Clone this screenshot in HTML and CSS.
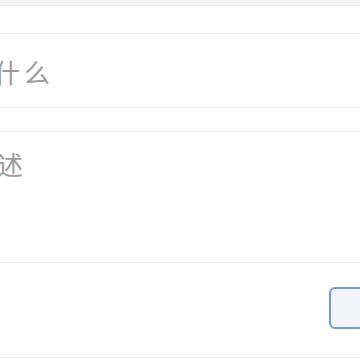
FILE: index.html
```html
<!DOCTYPE html>
<html lang="zh">
<head>
<meta charset="utf-8">
<link rel="stylesheet" href="styles.css">
</head>
<body>
<div class="page">
  <div class="band"></div>
  <div class="row row-short"></div>
  <div class="row row-input"><span class="placeholder shift">什么</span></div>
  <div class="gap"></div>
  <div class="row row-area"><span class="placeholder shift2">述</span></div>
  <div class="row row-actions"><button class="btn" type="button"></button></div>
</div>
</body>
</html>
```
FILE: styles.css
```css
html, body {
  margin: 0;
  padding: 0;
  background: #ffffff;
}
body {
  width: 360px;
  height: 360px;
  overflow: hidden;
  font-family: "Noto Sans CJK SC", "Noto Sans", sans-serif;
}
.page {
  display: flex;
  flex-direction: column;
}
.band {
  height: 5px;
  background: #f4f4f4;
  border-bottom: 1px solid #ebebeb;
}
.row {
  background: #ffffff;
  border-bottom: 1px solid #ebebeb;
}
.row-short {
  height: 27px;
}
.row-input {
  height: 73px;
  display: flex;
  align-items: center;
}
.gap {
  height: 23px;
  background: #fefefe;
  border-bottom: 1px solid #ebebeb;
}
.row-area {
  height: 116px;
  padding-top: 14px;
}
.row-actions {
  height: 94px;
  display: flex;
  align-items: flex-start;
}
.placeholder {
  font-size: 26px;
  line-height: 1.4;
  color: #9a9a9a;
  white-space: nowrap;
}
.shift {
  margin-left: -6px;
  margin-top: 3px;
  letter-spacing: 4px;
}
.shift2 {
  margin-left: -3px;
  display: block;
}
.btn {
  margin-left: 329px;
  margin-top: 24px;
  width: 80px;
  height: 42px;
  flex: none;
  border: 2px solid #6d9fd6;
  border-radius: 6px;
  background: #f3f4f7;
  padding: 0;
}
```
